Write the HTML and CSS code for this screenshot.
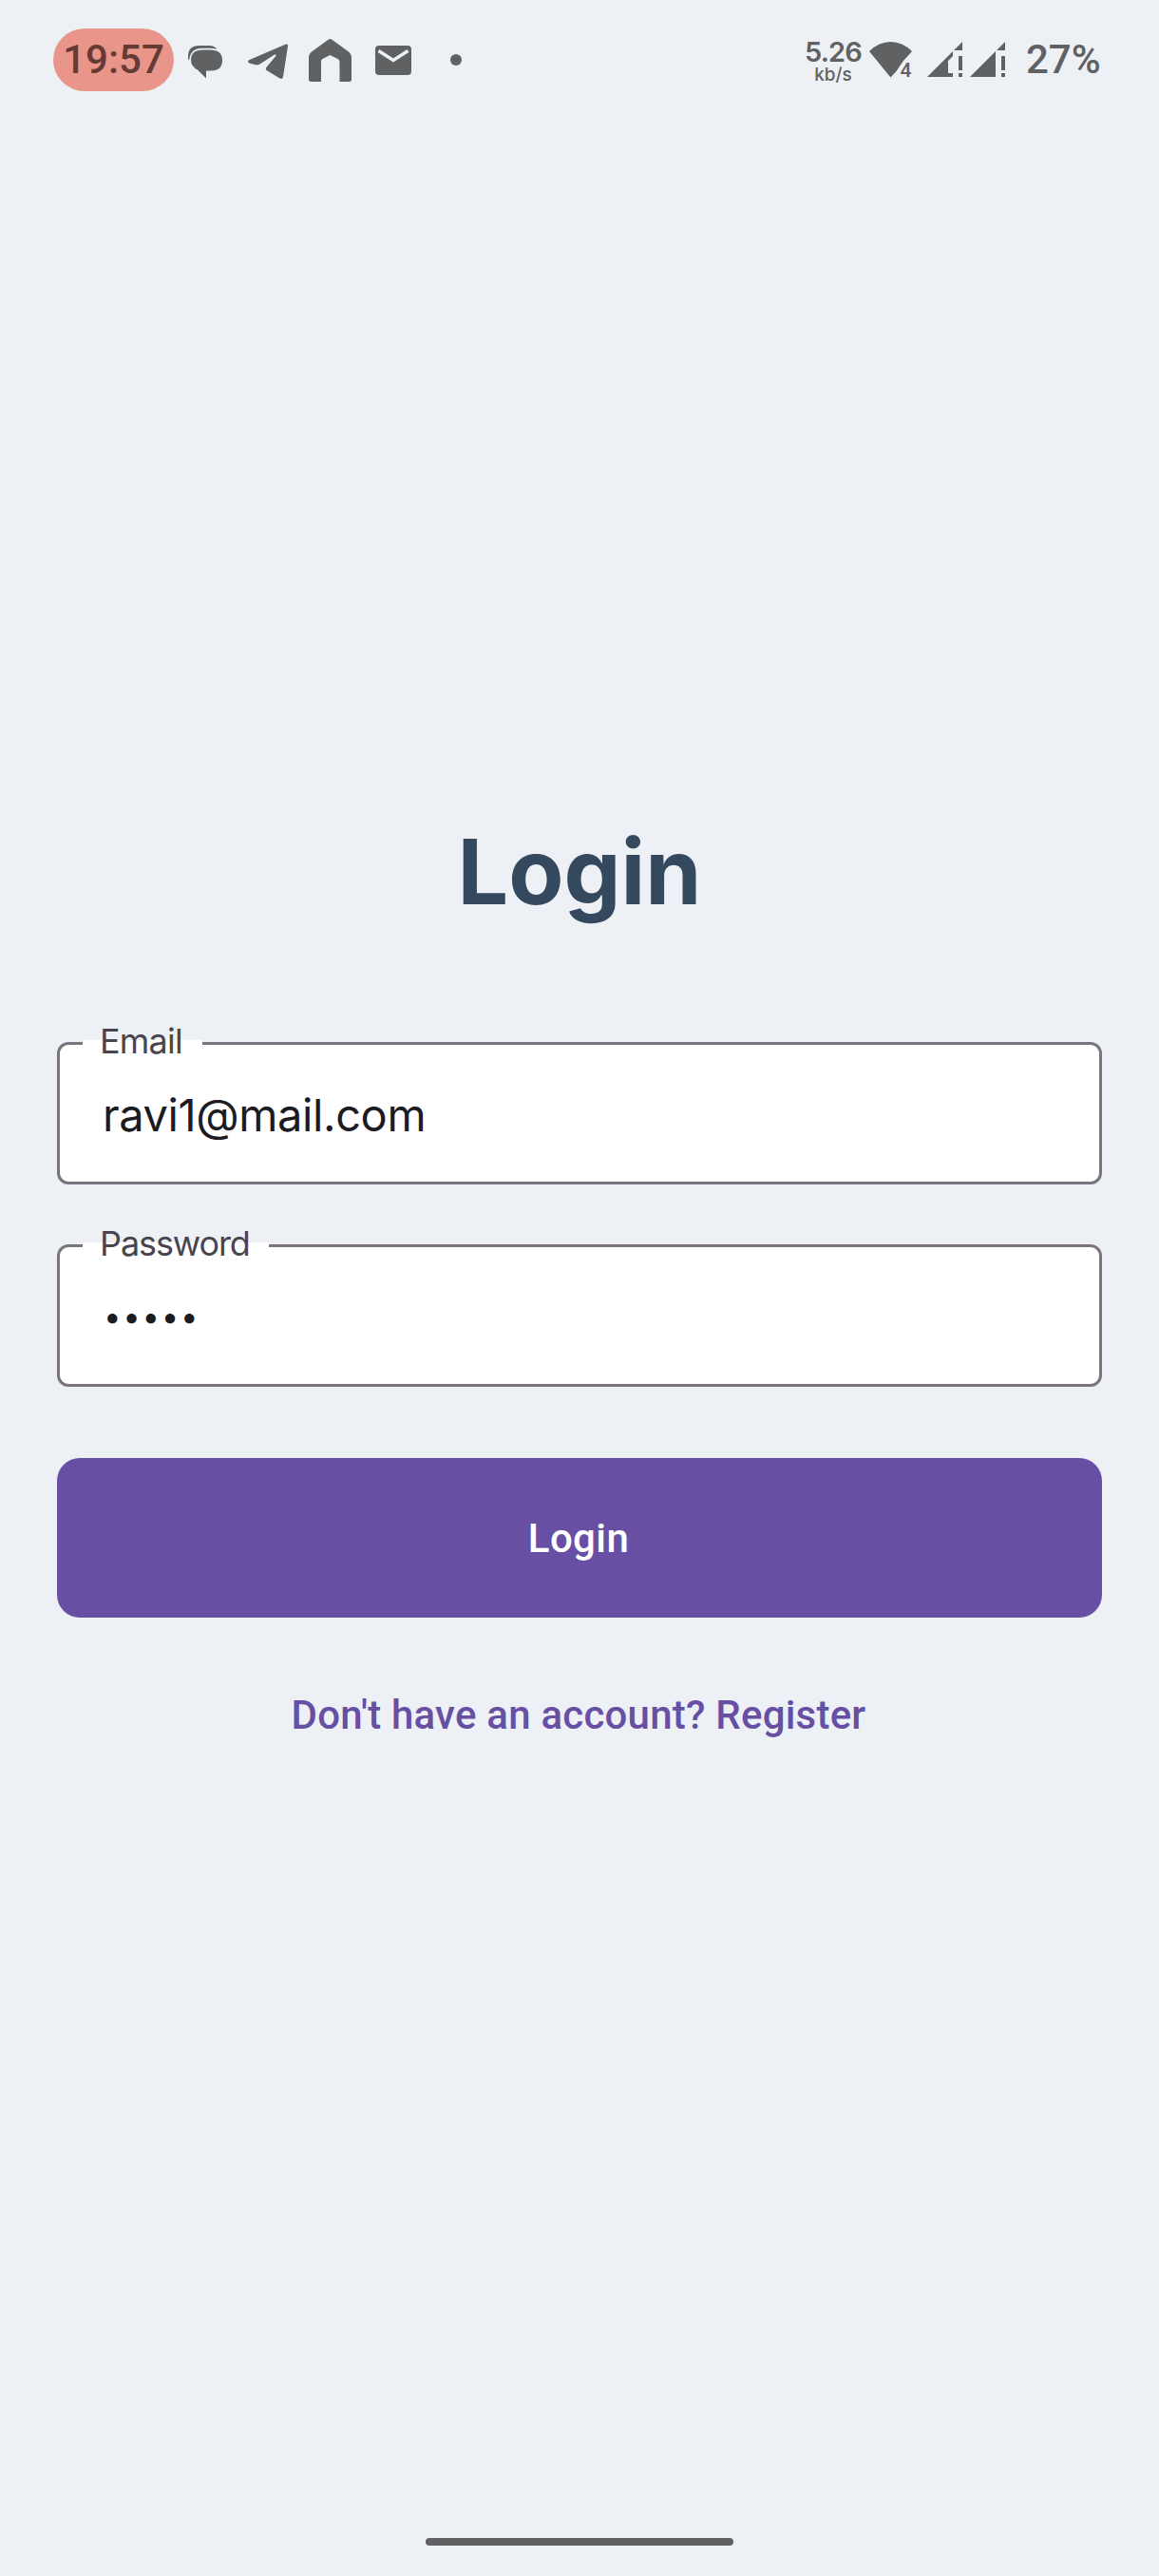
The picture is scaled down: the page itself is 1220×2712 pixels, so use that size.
FILE: index.html
```html
<!DOCTYPE html>
<html lang="en">
<head>
<meta charset="utf-8">
<title>Login</title>
<link rel="stylesheet" href="styles.css">
</head>
<body>
<div class="screen">
  <header class="status">
    <span class="clock">19:57</span>
    <svg class="icon chat" viewBox="0 0 36 35"><path d="M0 15V11Q0 0 12 0H22Q28 0 30.500 3.800Q27 2.700 22 2.700H15Q2.600 3 1.300 14.500Z"/><path d="M15.500 4.500H23Q36 4.500 36 15.500Q36 26.500 24 26.500H19V34.500L10.500 26Q3 22 3 15.500Q3 4.500 15.500 4.500Z"/></svg>
    <svg class="icon plane" viewBox="0 0 42 38"><path d="M1.500 17L40 .6Q42.300 0 42 2.500L37 35Q36.400 38 33.500 36.600L20 28.300Q17.800 26.700 19.500 24.700L29.500 12.800Q30 11 28 11.500L12.500 21.500Q10.500 22.700 8 22.200L1.500 20.500Q-1.500 18.600 1.500 17Z"/></svg>
    <svg class="icon home" viewBox="0 0 45 45"><path d="M20.500.7Q22.500-.6 24.500.7L42 13.500Q45 16 45 20V42.500Q45 45 42.500 45H32.500V24.500Q32.500 22.500 31 21.300L22.500 17L14 21.300Q13 22.200 13 24V45H2.500Q0 45 0 42.500V20Q0 16 3 13.500Z"/></svg>
    <svg class="icon mail" viewBox="0 0 38 31"><rect width="38" height="31" rx="4"/><path class="flap" d="M3.500 5.500L19 15.500L34.500 5.500"/></svg>
    <span class="more"></span>
    <div class="speed"><b>5.26</b><span>kb/s</span></div>
    <svg class="icon wifi" viewBox="0 0 45 38"><path d="M0 10Q10 0 22.500 0T45 10L36 20L28.500 31L22.500 37.500Z"/><path class="bg" d="M42 18H38L30 31V36H46V18Z"/><text x="32.500" y="36.500">4</text></svg>
    <svg class="icon signal one" viewBox="0 0 37 37"><path d="M37 0V9H28ZM0 37L27 10V15L22 20V33H27V37ZM33 15H37V30H33ZM33 33H37V37H33Z"/></svg>
    <svg class="icon signal two" viewBox="0 0 37 37"><path d="M37 0V9H28ZM0 37L27 10V37ZM33 15H37V30H33ZM33 33H37V37H33Z"/></svg>
    <span class="battery">27%</span>
  </header>
  <main class="form">
    <h1 class="title">Login</h1>
    <div class="field email"><label class="label">Email</label><span class="value">ravi1@mail.com</span></div>
    <div class="field password"><label class="label">Password</label><span class="value">•••••</span></div>
    <button class="submit" type="button">Login</button>
    <a class="register">Don't have an account? Register</a>
  </main>
  <div class="handle"></div>
</div>
</body>
</html>
```
FILE: styles.css
```css
* { box-sizing: border-box; }
body { margin: 0; background: #edf1f6; }
.screen {
  width: 1220px; height: 2712px; display: flex; flex-direction: column;
  background: #edf1f6; font-family: Roboto, sans-serif;
}
.status {
  display: flex; align-items: flex-start; height: 110px;
  padding: 30px 0 0 56px; color: #5f6163; flex: none;
}
.clock {
  width: 127px; height: 66px; border-radius: 33px; background: #e99589;
  color: #663a35; font-size: 42px; font-weight: 500; line-height: 65px;
  text-align: center;
}
.icon { display: block; fill: #5f6163; flex: none; overflow: visible; }
.chat { width: 36px; height: 35px; margin: 18px 0 0 15px; }
.plane { width: 42px; height: 38px; margin: 16px 0 0 27px; }
.home { width: 45px; height: 45px; margin: 11px 0 0 22px; }
.mail { width: 38px; height: 31px; margin: 18px 0 0 25px; }
.flap { fill: none; stroke: #edf1f6; stroke-width: 3.5; }
.more { width: 12px; height: 12px; border-radius: 50%; background: #5f6163; margin: 27px 0 0 41px; }
.speed {
  width: 60px; margin: 9px 0 0 361px; display: flex; flex-direction: column;
  align-items: center; font-family: Inter, sans-serif; white-space: nowrap;
}
.speed b { font-size: 29px; line-height: 31px; font-weight: 600; letter-spacing: -.8px; }
.speed span { font-size: 19px; line-height: 18px; font-weight: 500; }
.wifi { width: 45px; height: 38px; margin: 14px 0 0 8px; }
.wifi .bg { fill: #edf1f6; }
.wifi text { font: 500 21px Roboto, sans-serif; }
.signal { width: 37px; height: 37px; margin-top: 14px; }
.one { margin-left: 16px; }
.two { margin-left: 8px; }
.battery { font-size: 42px; font-weight: 500; line-height: 65px; margin-left: 22px; }
.form { flex: 1; display: flex; flex-direction: column; padding: 750px 60px 0; }
.title {
  margin: 0; height: 116px; text-align: center; color: #34495e;
  font: 700 95px/116px Inter, sans-serif;
}
.field {
  height: 150px; border: 3px solid #79747e; border-radius: 12px; background: #fff;
  font-family: Inter, sans-serif; padding-left: 24px; display: flex; flex-direction: column;
  align-items: flex-start;
}
.email { margin-top: 121px; }
.password { margin-top: 63px; }
.label {
  height: 36px; line-height: 36px; margin-top: -22px; padding: 0 18px; color: #49454f;
  font-size: 36px; background: linear-gradient(transparent 17px, #fff 17px);
}
.email .label { width: 126px; letter-spacing: -.8px; }
.password .label { width: 196px; letter-spacing: -1.1px; }
.value { font-size: 47px; line-height: 60px; margin: 30px 0 0 21px; color: #1c1b1f; letter-spacing: -.4px; }
.password .value { font-size: 33px; letter-spacing: 1.7px; margin: 29px 0 0 22px; }
.submit {
  height: 168px; margin-top: 75px; border: 0; border-radius: 24px; background: #6750a4;
  color: #fff; font: 500 42px/60px Roboto, sans-serif; letter-spacing: .4px;
  padding: 2px 2px 0 0;
}
.register {
  margin: 73px 2px 0 0; text-align: center; color: #6750a4; font-size: 42px;
  font-weight: 500; line-height: 60px; letter-spacing: .22px;
}
.handle { width: 324px; height: 8px; border-radius: 4px; background: #5f6163; margin: 0 auto 32px; flex: none; }
```
